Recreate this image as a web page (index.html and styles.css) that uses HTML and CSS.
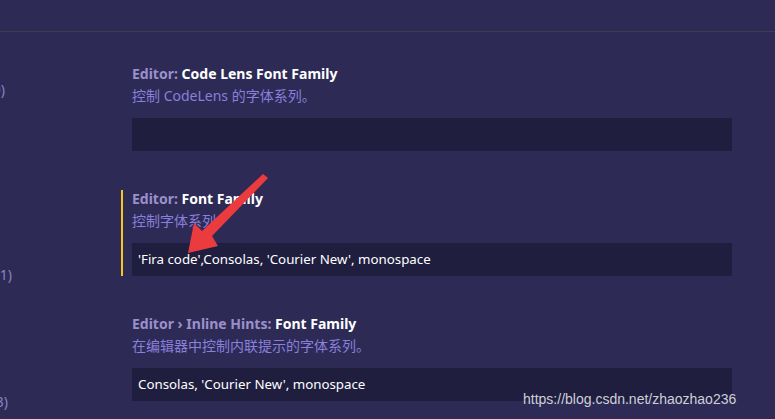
FILE: index.html
```html
<!DOCTYPE html>
<html lang="zh">
<head>
<meta charset="utf-8">
<title>Settings</title>
<link rel="stylesheet" href="styles.css">
</head>
<body>
<div class="page">
  <header class="topbar"></header>
  <div class="body">
    <nav class="toc">
      <div class="toc-item t1"><span>Text Editor (10)</span></div>
      <div class="toc-item t2"><span>Formatting (11)</span></div>
      <div class="toc-item t3"><span>Font (13)</span></div>
    </nav>
    <main class="settings">
      <section class="setting">
        <div class="title"><span class="cat">Editor: </span><span class="name">Code Lens Font Family</span></div>
        <div class="desc">控制 CodeLens 的字体系列。</div>
        <div class="input"></div>
      </section>
      <section class="setting focused">
        <div class="title"><span class="cat">Editor: </span><span class="name">Font Family</span></div>
        <div class="desc">控制字体系列。</div>
        <div class="input">'Fira code',Consolas, 'Courier New', monospace</div>
      </section>
      <section class="setting">
        <div class="title"><span class="cat">Editor › Inline Hints: </span><span class="name">Font Family</span></div>
        <div class="desc">在编辑器中控制内联提示的字体系列。</div>
        <div class="input">Consolas, 'Courier New', monospace</div>
      </section>
    </main>
  </div>
  <svg class="arrow" width="775" height="419" viewBox="0 0 775 419">
    <polygon points="263,174 268,178 212,236 218,246 188,253 194,223 202,231" fill="#ec3b3f"/>
  </svg>
  <div class="watermark">https://blog.csdn.net/zhaozhao236</div>
</div>
</body>
</html>
```
FILE: styles.css
```css
html, body {
  margin: 0;
  padding: 0;
  background: #2d2b55;
}
.page {
  position: relative;
  width: 775px;
  height: 419px;
  overflow: hidden;
  background: #2d2b55;
  font-family: "Noto Sans", "Noto Sans CJK SC", sans-serif;
  font-size: 14px;
}
.topbar {
  height: 31px;
  border-bottom: 1px solid #3c3d55;
}
.body {
  display: flex;
}
.toc {
  width: 14px;
  flex: none;
  overflow: hidden;
  color: #8983c3;
  font-size: 14px;
  line-height: 22px;
}
.toc-item {
  display: flex;
  justify-content: flex-end;
  white-space: nowrap;
}
.toc-item span { flex: none; }
.t1 { margin-top: 47px; padding-right: 9px; }
.t2 { margin-top: 163px; padding-right: 2px; }
.t3 { margin-top: 105px; padding-right: 6px; }
.settings {
  padding-left: 107px;
  padding-top: 33px;
  display: flex;
  flex-direction: column;
  gap: 39px;
}
.setting {
  border-left: 2px solid transparent;
  padding-left: 9px;
  width: 600px;
}
.setting.focused {
  border-left-color: #f7c51e;
}
.title {
  line-height: 18px;
  font-weight: 700;
  font-size: 14px;
  white-space: nowrap;
}
.cat { color: #9b90cc; }
.name { color: #ffffff; }
.desc {
  margin-top: 4px;
  line-height: 18px;
  font-size: 14px;
  color: #8a7fdb;
}
.input {
  margin-top: 13px;
  height: 33px;
  box-sizing: border-box;
  background: #1f1e3f;
  color: #ffffff;
  padding-left: 6px;
  font-size: 13.3px;
  line-height: 33px;
  white-space: nowrap;
}
.arrow {
  position: absolute;
  left: 0;
  top: 0;
  pointer-events: none;
}
.watermark {
  position: absolute;
  left: 523px;
  top: 390px;
  font-family: "Liberation Sans", Arial, sans-serif;
  font-size: 14px;
  line-height: 18px;
  color: #cfcfd8;
  white-space: nowrap;
}
```
